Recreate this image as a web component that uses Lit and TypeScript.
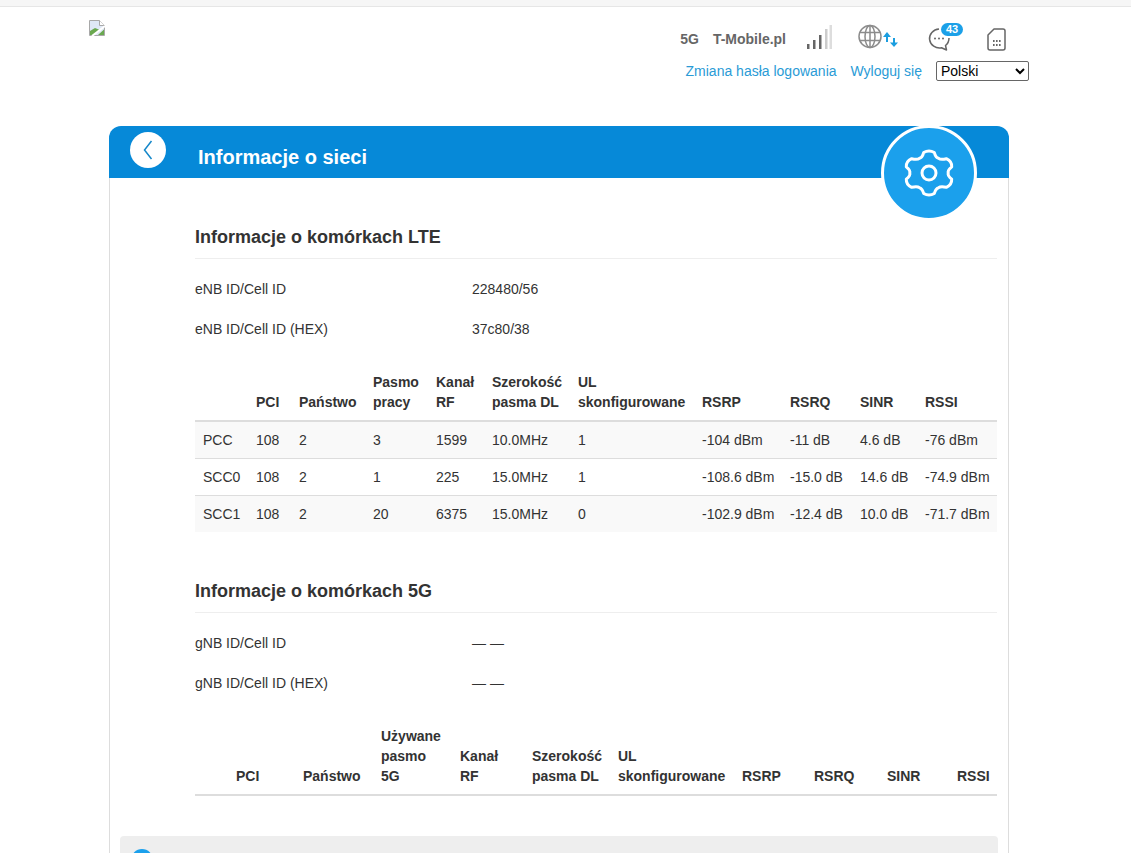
import { LitElement, html, css } from "lit";
import { customElement } from "lit/decorators.js";

const lteCols = [53, 43, 74, 63, 56, 86, 124, 88, 70, 65, 80];
const nrCols = [33, 67, 78, 79, 72, 86, 124, 72, 73, 70, 48];

const lteHead = ["", "PCI", "Państwo", "Pasmo<br>pracy", "Kanał<br>RF", "Szerokość<br>pasma DL", "UL<br>skonfigurowane", "RSRP", "RSRQ", "SINR", "RSSI"];
const nrHead = ["", "PCI", "Państwo", "Używane<br>pasmo<br>5G", "Kanał<br>RF", "Szerokość<br>pasma DL", "UL<br>skonfigurowane", "RSRP", "RSRQ", "SINR", "RSSI"];
const lteRows = [
  ["PCC", "108", "2", "3", "1599", "10.0MHz", "1", "-104 dBm", "-11 dB", "4.6 dB", "-76 dBm"],
  ["SCC0", "108", "2", "1", "225", "15.0MHz", "1", "-108.6 dBm", "-15.0 dB", "14.6 dB", "-74.9 dBm"],
  ["SCC1", "108", "2", "20", "6375", "15.0MHz", "0", "-102.9 dBm", "-12.4 dB", "10.0 dB", "-71.7 dBm"],
];

const head = (h: string) => h.split("<br>").map((l, i) => (i ? html`<br />${l}` : l));

const polar = (r: number, deg: number) => {
  const a = (deg * Math.PI) / 180;
  return `${(1.13 * r * Math.cos(a)).toFixed(2)} ${(r * Math.sin(a)).toFixed(2)}`;
};
const gearPath = (() => {
  let d = `M${polar(21, -90 - 13)}`;
  for (let k = 0; k < 6; k++) {
    const a = -90 + 60 * k;
    d += `Q${polar(23.5, a)} ${polar(21, a + 13)}`;
    d += `Q${polar(16.5, a + 21)} ${polar(17, a + 30)}`;
    d += `Q${polar(16.5, a + 39)} ${polar(21, a + 47)}`;
  }
  return d + "Z";
})();

@customElement("app-root")
export class AppRoot extends LitElement {
  static styles = css`
    :host { display: block; height: 853px; overflow: hidden; background: #fff; font-family: "Liberation Sans", Arial, sans-serif; font-size: 14px; line-height: 20px; color: #333; }
    .topline { height: 6px; background: #f6f6f6; border-bottom: 1px solid #e6e6e6; }
    .top { display: flex; justify-content: space-between; height: 119px; padding: 13px 102px 0 89px; box-sizing: border-box; }
    .logo { width: 16px; height: 16px; display: block; }
    .right { display: flex; flex-direction: column; align-items: flex-end; }
    .status { display: flex; align-items: center; height: 38px; color: #666; font-weight: bold; padding-right: 23px; }
    .net { margin-left: 14px; margin-right: 21px; }
    .ico { display: block; }
    .signal { margin-bottom: 4px; }
    .globe { margin-left: 26px; margin-bottom: 4px; }
    .msg { position: relative; margin-left: 30px; width: 26px; height: 26px; }
    .badge { position: absolute; left: 13px; top: -3px; width: 22px; height: 13px; border-radius: 7px; background: #1ba0e8; color: #fff; font-size: 11px; line-height: 13px; text-align: center; }
    .sim { margin-left: 33px; }
    .links { display: flex; align-items: center; margin-top: 3px; height: 20px; }
    .links a { color: #2a9bd6; text-decoration: none; margin-right: 14px; }
    select { width: 93px; height: 20px; font: 14px "Liberation Sans", Arial, sans-serif; color: #000; background: #fff; border: 1px solid #666; border-radius: 2px; padding: 0; }
    .panel { position: relative; width: 900px; margin-left: 109px; box-sizing: border-box; }
    .phead { height: 52px; background: #0689d8; border-radius: 12px 12px 0 0; display: flex; align-items: flex-start; padding-left: 21px; box-sizing: border-box; }
    .back { width: 36px; height: 36px; margin-top: 6px; border-radius: 50%; background: #fff; display: flex; align-items: center; justify-content: center; }
    .title { margin: 16px 0 0 32px; font-size: 20px; line-height: 30px; font-weight: bold; color: #fff; }
    .gear { position: absolute; left: 772px; top: -1px; width: 96px; height: 96px; box-sizing: border-box; border-radius: 50%; background: #1ba0ec; border: 3px solid #fff; display: flex; align-items: center; justify-content: center; }
    .pbody { border-left: 1px solid #ddd; border-right: 1px solid #ddd; padding: 0 11px 0 85px; height: 800px; }
    h3 { margin: 0; font-size: 18px; line-height: 26px; font-weight: bold; color: #333; padding-bottom: 8px; border-bottom: 1px solid #eee; }
    .h1 { padding-top: 46px; }
    .h2 { padding-top: 46px; }
    .info { display: flex; height: 40px; align-items: center; }
    .info span:first-child { width: 277px; }
    .rows { padding-top: 10px; }
    table { border-collapse: collapse; table-layout: fixed; width: 802px; }
    th { font-weight: bold; text-align: left; vertical-align: bottom; padding: 8px; border-bottom: 2px solid #ddd; color: #333; }
    td { padding: 8px; height: 20px; border-top: 1px solid #ddd; white-space: nowrap; }
    tr.odd td { background: #f9f9f9; }
    tbody tr:first-child td { border-top: 0; }
    .t1, .t2 { margin-top: 15px; }
    .note { height: 60px; margin: 40px 0 0 -75px; width: 878px; background: #eee; border-radius: 4px; padding: 13px 0 0 11px; box-sizing: border-box; }
    .dot { width: 22px; height: 22px; border-radius: 50%; background: #1ba0ec; }
  `;

  private table(cls: string, cols: number[], heads: string[], rows: string[][]) {
    return html`<table class=${cls}>
      <colgroup>${cols.map((w) => html`<col style="width:${w}px" />`)}</colgroup>
      <thead><tr>${heads.map((h) => html`<th>${head(h)}</th>`)}</tr></thead>
      ${rows.length
        ? html`<tbody>${rows.map((r, i) => html`<tr class=${i % 2 ? "even" : "odd"}>${r.map((c) => html`<td>${c}</td>`)}</tr>`)}</tbody>`
        : ""}
    </table>`;
  }

  render() {
    return html`
      <div class="topline"></div>
      <div class="top">
        <svg class="logo" viewBox="0 0 16 16">
          <path d="M.5.5H10.500L15.500 5.500V15.500H.5Z" fill="#dfe8f6" stroke="#a8a8a8" />
          <path d="M10.500 .5V5.500H15.500" fill="#fff" stroke="#a8a8a8" />
          <path d="M1 15V11L6 8L11 10L4 15Z" fill="#6aa84f" />
          <path d="M15 9.500L9 15H15Z" fill="#6aa84f" />
          <path d="M3 16L16 6" stroke="#fff" stroke-width="2" />
        </svg>
        <div class="right">
          <div class="status">
            <span>5G</span><span class="net">T-Mobile.pl</span>
            <svg class="ico signal" width="25" height="24" viewBox="0 0 25 24">
              <g fill="#666"><rect x="0" y="19" width="2.500" height="5" /><rect x="6" y="15" width="2.500" height="9" /><rect x="12" y="10" width="2.500" height="14" /></g>
              <rect x="18" y="4" width="2.500" height="20" fill="#ccc" /><rect x="22.500" y="0" width="2.500" height="24" fill="#ddd" />
            </svg>
            <svg class="ico globe" width="40" height="26" viewBox="0 0 40 26" fill="none">
              <g stroke="#8c8c8c" stroke-width="1.500">
                <circle cx="12" cy="12.500" r="11" /><ellipse cx="12" cy="12.500" rx="5" ry="11" /><path d="M12 1.500V23.500M2 8.500H22M2 16.500H22" />
              </g>
              <path d="M29 18V12" stroke="#1b9ee0" stroke-width="2" /><path d="M25 13L29 8L33 13Z" fill="#1b9ee0" />
              <path d="M36 14V19" stroke="#1b9ee0" stroke-width="2" /><path d="M32 18.500H40L36 23Z" fill="#1b9ee0" />
            </svg>
            <div class="msg">
              <svg class="ico" width="26" height="26" viewBox="0 0 26 26" fill="none">
                <path d="M11 3A10 9.500 0 1 0 13.500 21.800L18.500 24L17.500 19.500A9.500 9.500 0 0 0 21 12" stroke="#666" stroke-width="1.500" stroke-linejoin="round" />
                <g fill="#666"><circle cx="7" cy="12.500" r="1" /><circle cx="11" cy="12.500" r="1" /><circle cx="15" cy="12.500" r="1" /></g>
              </svg>
              <span class="badge">43</span>
            </div>
            <svg class="ico sim" width="19" height="23" viewBox="0 0 19 23" fill="none">
              <path d="M7 1H16A2 2 0 0 1 18 3V20A2 2 0 0 1 16 22H3A2 2 0 0 1 1 20V7Z" stroke="#666" stroke-width="1.500" stroke-linejoin="round" />
              <g fill="#666"><rect x="6" y="12" width="1.600" height="2" /><rect x="9" y="12" width="1.600" height="2" /><rect x="12" y="12" width="1.600" height="2" /><rect x="6" y="16" width="1.600" height="2" /><rect x="9" y="16" width="1.600" height="2" /><rect x="12" y="16" width="1.600" height="2" /></g>
            </svg>
          </div>
          <div class="links">
            <a>Zmiana hasła logowania</a><a>Wyloguj się</a>
            <select><option>Polski</option></select>
          </div>
        </div>
      </div>
      <div class="panel">
        <div class="phead">
          <div class="back">
            <svg width="12" height="22" viewBox="0 0 12 22" fill="none"><path d="M9.500 2L2.500 11L9.500 20" stroke="#1587c9" stroke-width="1.500" /></svg>
          </div>
          <div class="title">Informacje o sieci</div>
        </div>
        <div class="gear">
          <svg width="60" height="60" viewBox="-30 -30 60 60" fill="none" stroke="#fff" stroke-width="3" stroke-linejoin="round">
            <circle r="7" />
            <path d=${gearPath} />
          </svg>
        </div>
        <div class="pbody">
          <div class="h1"><h3>Informacje o komórkach LTE</h3></div>
          <div class="rows">
            <div class="info"><span>eNB ID/Cell ID</span><span>228480/56</span></div>
            <div class="info"><span>eNB ID/Cell ID (HEX)</span><span>37c80/38</span></div>
          </div>
          ${this.table("t1", lteCols, lteHead, lteRows)}
          <div class="h2"><h3>Informacje o komórkach 5G</h3></div>
          <div class="rows">
            <div class="info"><span>gNB ID/Cell ID</span><span>— —</span></div>
            <div class="info"><span>gNB ID/Cell ID (HEX)</span><span>— —</span></div>
          </div>
          ${this.table("t2", nrCols, nrHead, [])}
          <div class="note"><div class="dot"></div></div>
        </div>
      </div>
    `;
  }
}
